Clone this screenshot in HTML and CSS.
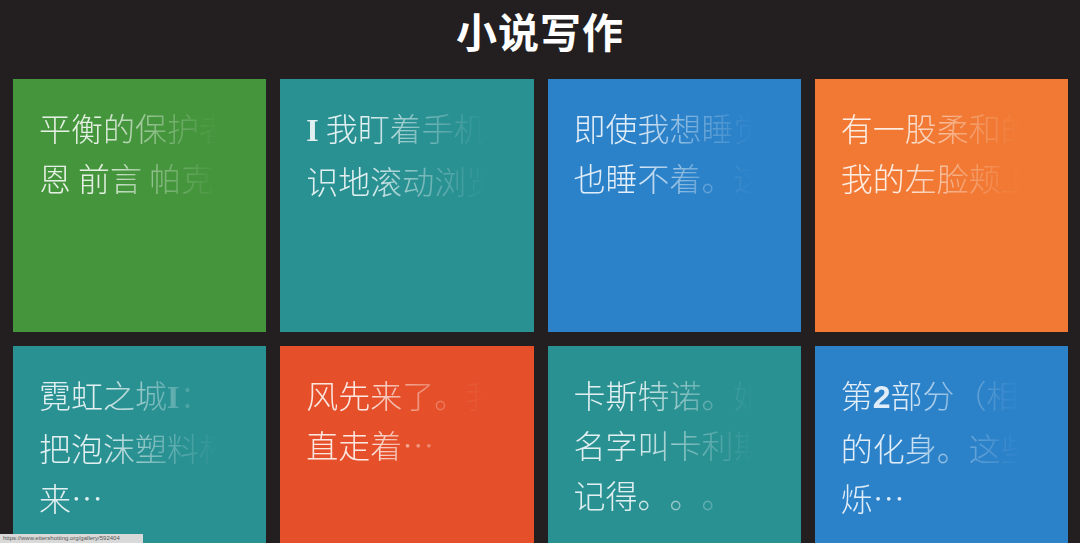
FILE: index.html
```html
<!DOCTYPE html>
<html lang="zh">
<head>
<meta charset="utf-8">
<title>小说写作</title>
<link rel="stylesheet" href="styles.css">
</head>
<body>
<h1 class="title">小说写作</h1>
<main class="grid">
  <div class="tile green"><p class="text">平衡的保护者<br>恩 前言 帕克</p></div>
  <div class="tile teal"><p class="text"><span class="lat">I</span> 我盯着手机<br>识地滚动浏览</p></div>
  <div class="tile blue"><p class="text">即使我想睡觉<br>也睡不着。这</p></div>
  <div class="tile orange"><p class="text">有一股柔和的<br>我的左脸颊上</p></div>
  <div class="tile teal"><p class="text">霓虹之城<span class="lat">I</span>：<br>把泡沫塑料杯<br>来…</p></div>
  <div class="tile red"><p class="text">风先来了。我<br>直走着…</p></div>
  <div class="tile teal"><p class="text">卡斯特诺。她<br>名字叫卡利斯<br>记得。。。</p></div>
  <div class="tile blue"><p class="text">第<span class="num">2</span>部分（相<br>的化身。这些<br>烁…</p></div>
</main>
<div class="status">https://www.ettershotting.org/gallery/592404</div>
</body>
</html>
```
FILE: styles.css
```css
html, body {
  margin: 0;
  padding: 0;
  background: #231f20;
  width: 1080px;
  height: 543px;
  overflow: hidden;
}
body {
  font-family: "Noto Sans CJK SC", "Noto Sans", sans-serif;
  position: relative;
}
.title {
  margin: 0 0 19px;
  height: 60px;
  line-height: 60px;
  text-align: center;
  font-size: 41px;
  font-weight: 700;
  color: #ffffff;
  letter-spacing: 1px;
}
.grid {
  display: grid;
  grid-template-columns: repeat(4, 1fr);
  grid-auto-rows: 253px;
  gap: 14px;
  padding: 0 12px 0 13px;
}
.tile {
  padding: 23px 0 0 26px;
  overflow: hidden;
}
.green { background: #45953d; }
.teal { background: #2a9193; }
.blue { background: #2c82c9; }
.orange { background: #f17934; }
.red { background: #e54f29; }
.text {
  margin: 0;
  font-size: 32px;
  line-height: 50px;
  font-weight: 300;
  color: rgba(255, 255, 255, 0.86);
  white-space: nowrap;
  text-spacing-trim: space-all;
  -webkit-mask-image: linear-gradient(to right, #000 0, #000 60px, rgba(0,0,0,0.4) 120px, rgba(0,0,0,0.08) 165px, transparent 180px);
  mask-image: linear-gradient(to right, #000 0, #000 60px, rgba(0,0,0,0.4) 120px, rgba(0,0,0,0.08) 165px, transparent 180px);
}
.lat {
  font-family: "Liberation Serif", serif;
  font-weight: 700;
}
.num {
  font-family: "Liberation Sans", sans-serif;
  font-weight: 700;
}
.status {
  position: absolute;
  left: 0;
  bottom: 0;
  width: 140px;
  height: 9px;
  padding-left: 3px;
  background: #d9d9d9;
  color: #555;
  font-family: "Liberation Sans", sans-serif;
  font-size: 6px;
  line-height: 9px;
  white-space: nowrap;
  overflow: hidden;
}
```
